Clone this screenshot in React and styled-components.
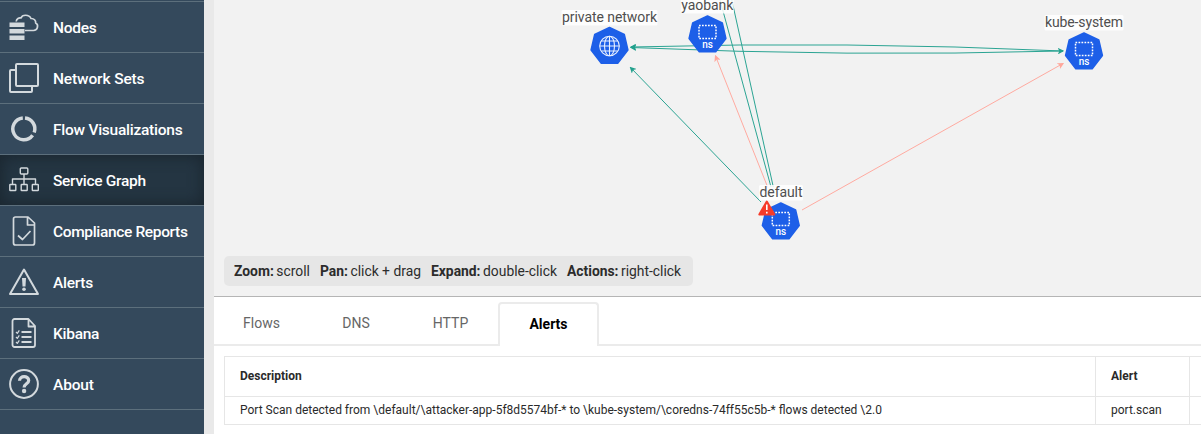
import React from 'react';
import styled, { createGlobalStyle, css } from 'styled-components';

const Global = createGlobalStyle`
  * { box-sizing: border-box; }
  body { margin: 0; font-family: Roboto, sans-serif; background: #e9e9e9; overflow: hidden; }
`;
const Shell = styled.div`display: flex; height: 434px; overflow: hidden;`;
const Sidebar = styled.nav`
  width: 204px; flex: none; background: #34495c; padding-top: 1px;
`;
const NavList = styled.ul`list-style: none; margin: 0; padding: 0; border-top: 1px solid #5c6f7c;`;
const NavItem = styled.li`
  display: flex; align-items: center; height: 51px; padding-left: 8px;
  border-bottom: 1px solid #5c6f7c; color: #fff;
  ${p => p.$active && css`background: #243542; box-shadow: inset 0 0 14px 2px #1b2730;`}
`;
const NavIcon = styled.svg`
  width: 32px; height: 32px; margin-right: 13px; flex: none;
  fill: none; stroke: #d3d9dd; stroke-width: 2; stroke-linejoin: round;
`;
const NavLabel = styled.span`
  font: 500 15.5px/24px Roboto, sans-serif; white-space: nowrap; padding-top: 2px;
  letter-spacing: ${p => p.$track}px;
`;
const Main = styled.main`flex: 1; min-width: 0; margin-left: 10px; background: #fff;`;
const Graph = styled.section`
  position: relative; height: 297px; background: #f2f2f2; border-bottom: 1px solid #b5b5b5;
  display: flex; align-items: flex-end; padding: 0 0 10px 10px;
`;
const Canvas = styled.svg`position: absolute; left: 0; top: 0; width: 987px; height: 296px;`;
const Hints = styled.div`
  position: relative; display: flex; gap: 10px; align-items: center; height: 30px; width: 469px; padding: 0 10px;
  border-radius: 5px; background: #e6e6e6; color: #2c2c2c; font-size: 13.86px; white-space: nowrap;
  b { font-weight: 700; margin-right: 2.5px; }
`;
const Tabs = styled.div`display: flex; height: 49px; padding-top: 5px; box-shadow: inset 0 -2px #ebebeb;`;
const Tab = styled.button`
  width: ${p => p.$w}px; height: 44px; padding: 0 0 2px; border: 0; background: none;
  font: 400 14px Roboto, sans-serif; color: #666;
  ${p => p.$active && css`
    background: #fff; border: 2px solid #ebebeb; border-bottom: 0; border-radius: 4px 4px 0 0;
    color: #000; font-weight: 700; padding: 0 0 2px;
  `}
`;
const Table = styled.div`
  display: grid; grid-template-columns: 871px 94px 30px; margin: 10px 0 0 10px; width: 995px;
  border-top: 1px solid #e6e6e6; border-left: 1px solid #e6e6e6;
`;
const Cell = styled.div`
  display: flex; align-items: center; padding: 0 0 2px 15px; color: #2a2a2a; font-size: 12px;
  height: ${p => (p.$head ? 40 : 28)}px; font-weight: ${p => (p.$head ? 700 : 400)};
  border-right: 1px solid #e6e6e6; border-bottom: 1px solid #e6e6e6; white-space: nowrap;
`;

const icons = {
  nodes: <><path d="M8.2 10.5C8.5 7.5 11 6.5 13 7c1-3.5 8-4 10 .5 3-.2 5 2 4.700 4.500 3 1.500 2.500 7.800-2.700 7.500h-8" strokeWidth="1.700" /><path d="M1.500 11.500h15v4.500h-15zM1.500 18h15v4.500h-15zM1.500 24.500h15V29h-15z" fill="#d3d9dd" stroke="none" /></>,
  sets: <><rect x="8" y="2" width="22" height="22" rx="1" /><path d="M7 8H3a1 1 0 0 0-1 1v20a1 1 0 0 0 1 1h20a1 1 0 0 0 1-1v-4" /></>,
  flow: <g strokeWidth="3.500"><path d="M17 5A10.900 10.900 0 0 1 26.200 19.500M24.600 22.200A10.900 10.900 0 1 1 14.800 5" /></g>,
  graph: <g strokeWidth="1.400"><rect x="12.300" y="4" width="7.500" height="6" rx="1" /><path d="M16 10v10M4.500 20v-5h23v5" /><rect x="1.800" y="20.500" width="6" height="6" rx=".5" /><rect x="13.200" y="20.500" width="6" height="6" rx=".5" /><rect x="24.300" y="20.500" width="6" height="6" rx=".5" /></g>,
  report: <g strokeWidth="1.700"><path d="M7.500 2h12.500l6.500 6v20a2 2 0 0 1-2 2h-17a2 2 0 0 1-2-2V4a2 2 0 0 1 2-2zM19.500 2v8h7" /><path d="M10 20.500l4.500 4 8-8.500" /></g>,
  alert: <><path d="M16 3.500L30 28H2z" /><path d="M14 12h4l-.5 8.500h-3z" fill="#d3d9dd" stroke="none" /><circle cx="16" cy="23.300" r="1.800" fill="#d3d9dd" stroke="none" /></>,
  kibana: <><path d="M6.500 2h14l6.500 7v19a2 2 0 0 1-2 2H6.500a2 2 0 0 1-2-2V4a2 2 0 0 1 2-2zM20.500 2v7.500H27" strokeWidth="1.800" /><path d="M8 15l1.300 1.300 2-3M8 20l1.300 1.300 2-3M8 25l1.300 1.300 2-3" strokeWidth="1.200" /><path d="M13.500 15h10M13.500 20h10M13.500 25h10" strokeWidth="1.800" /></>,
  about: <><circle cx="16" cy="16" r="13.900" strokeWidth="2" /><path d="M11.500 12.800c.1-5.500 9.200-5.300 9.200-.4 0 3.400-4.600 3.300-4.600 7" strokeWidth="3.200" /><circle cx="16.100" cy="23" r="2.200" fill="#d3d9dd" stroke="none" /></>,
};
const nav = [
  ['Nodes', 'nodes', -0.3], ['Network Sets', 'sets', -0.13], ['Flow Visualizations', 'flow', -0.25],
  ['Service Graph', 'graph', -0.3], ['Compliance Reports', 'report', -0.35], ['Alerts', 'alert', -0.27],
  ['Kibana', 'kibana', -0.27], ['About', 'about', -0.15],
];

const HEPTAGON = 'M0-18.500L14.800-11.500 18.400 4 8.200 17.300H-8.200L-18.400 4-14.800-11.500z';

function Namespace({ x, y, globe }) {
  return (
    <g transform={`translate(${x} ${y})`}>
      <path d={HEPTAGON} fill="#1d5fe8" stroke="#1d5fe8" strokeWidth="1.500" strokeLinejoin="round" />
      {globe ? (
        <g fill="none" stroke="#e8efff" strokeWidth="1.100">
          <circle r="9.800" /><ellipse rx="5" ry="9.800" /><path d="M0-9.800V9.800M-9.800 0H9.800M-8.300-5H8.300M-8.300 5H8.300" />
        </g>
      ) : (
        <>
          <rect x="-8.500" y="-9" width="17" height="13" fill="none" stroke="#fff" strokeWidth="1.500" strokeDasharray="1.700 1.300" />
          <text y="13.500" textAnchor="middle" fill="#fff" fontSize="10" fontWeight="500">ns</text>
        </>
      )}
    </g>
  );
}
function NodeLabel({ x, y, w, children }) {
  return (
    <g>
      <rect x={x - w / 2 - 0.500} y={y - 12} width={w + 1} height="15.500" rx="1.500" fill="#fff" fillOpacity=".85" />
      <text x={x} y={y} textAnchor="middle" fill="#4f4f4f" fontSize="14" textLength={w}>{children}</text>
    </g>
  );
}

export default function App() {
  return (
    <>
      <Global />
      <Shell>
        <Sidebar>
          <NavList>
            {nav.map(([label, icon, track]) => (
              <NavItem key={label} $active={label === 'Service Graph'}>
                <NavIcon viewBox="0 0 32 32">{icons[icon]}</NavIcon>
                <NavLabel $track={track}>{label}</NavLabel>
              </NavItem>
            ))}
          </NavList>
        </Sidebar>
        <Main>
          <Graph>
            <Canvas viewBox="214 0 987 296">
              <defs>
                <marker id="green" viewBox="0 0 8 8" refX="6.500" refY="4" markerWidth="6.500" markerHeight="6.500" markerUnits="userSpaceOnUse" orient="auto-start-reverse"><path d="M0 0L8 4 0 8 2 4z" fill="#21a08c" /></marker>
                <marker id="pink" viewBox="0 0 8 8" refX="6.500" refY="4" markerWidth="6.500" markerHeight="6.500" markerUnits="userSpaceOnUse" orient="auto-start-reverse"><path d="M0 0L8 4 0 8 2 4z" fill="#ffa89c" /></marker>
              </defs>
              <g fill="none" stroke="#2ba493" strokeWidth="1">
                <path d="M1063 51Q847 41 631 47" markerEnd="url(#green)" />
                <path d="M631 47.500Q847 57 1063 51" markerStart="url(#green)" markerEnd="url(#green)" />
                <path d="M761 202L630.500 67.500" markerEnd="url(#green)" />
                <path d="M720 0L771 187M731.800 0L773.300 187" />
              </g>
              <g fill="none" stroke="#ffaaa0" strokeWidth="1">
                <path d="M768 188L715.500 56" markerEnd="url(#pink)" />
                <path d="M802 210L1063 63.500" markerEnd="url(#pink)" />
              </g>
              <Namespace x={609.5} y={46} globe />
              <Namespace x={707.5} y={34.5} />
              <Namespace x={1084} y={51.5} />
              <Namespace x={780.800} y={221.5} />
              <NodeLabel x={609.5} y={22} w={95}>private network</NodeLabel>
              <NodeLabel x={707.3} y={10} w={52}>yaobank</NodeLabel>
              <NodeLabel x={1084} y={27} w={78}>kube-system</NodeLabel>
              <NodeLabel x={781} y={197} w={43}>default</NodeLabel>
              <path d="M766.800 201.500L774.300 214.500H759.300z" fill="#f63b2a" stroke="#f63b2a" strokeWidth="2" strokeLinejoin="round" />
              <path d="M766.800 204.500V210M766.800 211.800V213.500" stroke="#fff" strokeWidth="1.600" />
            </Canvas>
            <Hints>
              <span><b>Zoom:</b>scroll</span><span><b>Pan:</b>click + drag</span>
              <span><b>Expand:</b>double-click</span><span><b>Actions:</b>right-click</span>
            </Hints>
          </Graph>
          <Tabs>
            <Tab $w={95}>Flows</Tab><Tab $w={94}>DNS</Tab><Tab $w={95}>HTTP</Tab><Tab $w={101} $active>Alerts</Tab>
          </Tabs>
          <Table>
            <Cell $head>Description</Cell><Cell $head>Alert</Cell><Cell $head />
            <Cell>Port Scan detected from \default/\attacker-app-5f8d5574bf-* to \kube-system/\coredns-74ff55c5b-* flows detected \2.0</Cell>
            <Cell>port.scan</Cell><Cell />
          </Table>
        </Main>
      </Shell>
    </>
  );
}
